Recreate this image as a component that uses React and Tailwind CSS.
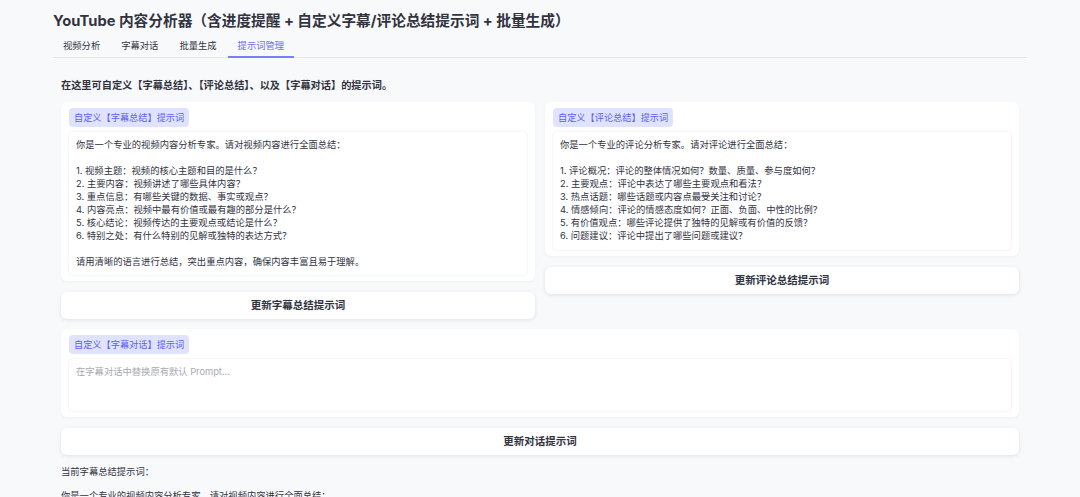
import { useState } from "react";

const SUBTITLE_PROMPT = `你是一个专业的视频内容分析专家。请对视频内容进行全面总结：

1. 视频主题：视频的核心主题和目的是什么？
2. 主要内容：视频讲述了哪些具体内容？
3. 重点信息：有哪些关键的数据、事实或观点？
4. 内容亮点：视频中最有价值或最有趣的部分是什么？
5. 核心结论：视频传达的主要观点或结论是什么？
6. 特别之处：有什么特别的见解或独特的表达方式？

请用清晰的语言进行总结，突出重点内容，确保内容丰富且易于理解。`;

const COMMENT_PROMPT = `你是一个专业的评论分析专家。请对评论进行全面总结：

1. 评论概况：评论的整体情况如何？数量、质量、参与度如何？
2. 主要观点：评论中表达了哪些主要观点和看法？
3. 热点话题：哪些话题或内容点最受关注和讨论？
4. 情感倾向：评论的情感态度如何？正面、负面、中性的比例？
5. 有价值观点：哪些评论提供了独特的见解或有价值的反馈？
6. 问题建议：评论中提出了哪些问题或建议？`;

const tabs = ["视频分析", "字幕对话", "批量生成", "提示词管理"];

function Badge({ text }) {
	return (
		<span className="inline-flex h-[19px] items-center self-start rounded-[4px] bg-[#e0e3fd] px-[5px] text-[9.2px] text-[#5b5ff2]">
			{text}
		</span>
	);
}

function PromptCard({ label, value, height, placeholder, onChange }) {
	return (
		<div className="flex flex-col gap-[5px] rounded-[6px] bg-white px-[8px] pt-[6px] pb-[6px] shadow-[0_1px_3px_rgba(0,0,0,0.04)]">
			<Badge text={label} />
			<textarea
				value={value}
				onChange={(e) => onChange(e.target.value)}
				placeholder={placeholder}
				style={{ height }}
				className="w-full resize-none overflow-hidden rounded-[4px] bg-white px-[7px] py-[6px] text-[9.3px] leading-[13px] text-[#31333f] shadow-[0_0_2px_rgba(0,0,0,0.12)] outline-none placeholder:text-[#a7a9b0]"
			/>
		</div>
	);
}

function UpdateButton({ text }) {
	return (
		<button className="flex h-[27px] w-full items-center justify-center rounded-[6px] bg-white text-[10.5px] font-bold text-[#31333f] shadow-[0_1px_4px_rgba(0,0,0,0.1)]">
			{text}
		</button>
	);
}

export default function App() {
	const [active, setActive] = useState(3);
	const [subtitle, setSubtitle] = useState(SUBTITLE_PROMPT);
	const [comment, setComment] = useState(COMMENT_PROMPT);
	const [chat, setChat] = useState("");

	return (
		<div className="min-h-screen bg-[#f8f9fb] px-[53px] font-['Inter','Noto_Sans_CJK_SC',sans-serif] text-[#31333f]">
			<h1 className="pt-[11px] text-[14.7px] leading-[20px] font-bold">
				YouTube 内容分析器（含进度提醒 + 自定义字幕/评论总结提示词 + 批量生成）
			</h1>
			<div className="mt-[4px] flex gap-[1px] border-b border-[#e6e7ea]">
				{tabs.map((t, i) => (
					<button
						key={t}
						onClick={() => setActive(i)}
						className={
							i === active
								? "-mb-[1px] h-[23px] border-b-2 border-[#7b7ff3] px-[10px] text-[9.3px] text-[#6a6ef2]"
								: "-mb-[1px] h-[23px] border-b-2 border-transparent px-[10px] text-[9.3px] text-[#31333f]"
						}
					>
						{t}
					</button>
				))}
			</div>

			<div className="px-[8px]">
				<p className="mt-[20px] text-[10.2px] leading-[14px] font-bold">
					在这里可自定义【字幕总结】、【评论总结】、以及【字幕对话】的提示词。
				</p>

				<div className="mt-[10px] grid grid-cols-2 items-start gap-[10px]">
					<div className="flex flex-col gap-[11px]">
						<PromptCard
							label="自定义【字幕总结】提示词"
							value={subtitle}
							height={143}
							onChange={setSubtitle}
						/>
						<UpdateButton text="更新字幕总结提示词" />
					</div>
					<div className="flex flex-col gap-[11px]">
						<PromptCard
							label="自定义【评论总结】提示词"
							value={comment}
							height={118}
							onChange={setComment}
						/>
						<UpdateButton text="更新评论总结提示词" />
					</div>
				</div>

				<div className="mt-[10px] flex flex-col gap-[11px]">
					<PromptCard
						label="自定义【字幕对话】提示词"
						value={chat}
						height={52}
						placeholder="在字幕对话中替换原有默认 Prompt..."
						onChange={setChat}
					/>
					<UpdateButton text="更新对话提示词" />
				</div>

				<p className="mt-[10px] text-[9.3px] leading-[14px]">当前字幕总结提示词：</p>
				<p className="mt-[10px] text-[9.3px] leading-[14px]">
					你是一个专业的视频内容分析专家。请对视频内容进行全面总结：
				</p>
			</div>
		</div>
	);
}
